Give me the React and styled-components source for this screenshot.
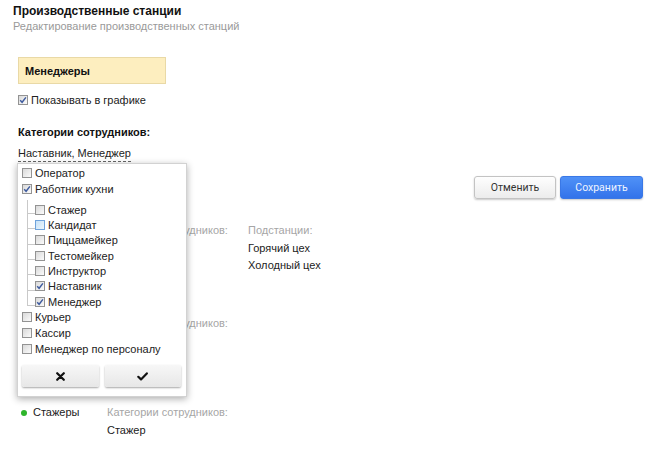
import React from "react";
import styled, { createGlobalStyle } from "styled-components";

const Global = createGlobalStyle`
  html, body { margin: 0; padding: 0; background: #fff; }
  body {
    font-family: "Liberation Sans", Arial, sans-serif;
    font-size: 11px;
    color: #222;
  }
`;

const Page = styled.div`
  padding: 0 7px 0 13px;
`;

const Title = styled.div`
  margin-top: 3px;
  font-size: 12px;
  font-weight: bold;
  line-height: 16px;
  color: #111;
`;

const Subtitle = styled.div`
  font-size: 11px;
  line-height: 15px;
  color: #9a9a9a;
`;

const Form = styled.div`
  padding-left: 5px;
`;

const NameBox = styled.div`
  box-sizing: border-box;
  margin-top: 23px;
  width: 148px;
  height: 27px;
  display: flex;
  align-items: center;
  padding-left: 6px;
  background: #fdeebf;
  border: 1px solid #e9d9a6;
  font-weight: bold;
  color: #111;
`;

const CheckRow = styled.label`
  margin-top: 8px;
  display: flex;
  align-items: center;
  gap: 3px;
  line-height: 16px;
  height: 16px;
`;

const SectionLabel = styled.div`
  margin-top: 16px;
  font-size: 11px;
  font-weight: bold;
  line-height: 16px;
  color: #111;
`;

const SelectWrap = styled.div`
  position: relative;
  margin-top: 6px;
  height: 16px;
`;

const SelectValue = styled.span`
  display: inline-block;
  line-height: 15px;
  border-bottom: 1px dashed #666;
  color: #222;
`;

const Popup = styled.div`
  position: absolute;
  left: -1px;
  top: calc(100% + 1px);
  width: 170px;
  box-sizing: border-box;
  padding: 1px 5px 9px 4px;
  background: #fff;
  border: 1px solid #d2d2d2;
  box-shadow: 0 2px 7px rgba(0, 0, 0, 0.32);
  z-index: 10;
  font-size: 11px;
`;

const Item = styled.div`
  display: flex;
  align-items: center;
  gap: 3px;
  height: ${(p) => (p.$child ? "15.33px" : "16px")};
  position: relative;
  color: #222;
  white-space: nowrap;

  ${(p) =>
    p.$child &&
    `
    &::before {
      content: "";
      position: absolute;
      left: -8px;
      top: 11px;
      width: 8px;
      height: 1px;
      background: #c9c9c9;
    }
  `}
`;

const Children = styled.div`
  position: relative;
  margin-left: 13px;
  margin-top: 5px;

  &::before {
    content: "";
    position: absolute;
    left: -8px;
    top: -2px;
    bottom: 4px;
    width: 1px;
    background: #c9c9c9;
  }
`;

const Box = styled.span`
  box-sizing: border-box;
  flex: none;
  width: 10px;
  height: 10px;
  display: inline-flex;
  align-items: center;
  justify-content: center;
  border: 1px solid ${(p) => (p.$hover ? "#6fa3dc" : "#939393")};
  background: ${(p) =>
    p.$hover
      ? "linear-gradient(135deg, #c7e2f8, #eaf5fd)"
      : "linear-gradient(135deg, #d9d9d9, #fbfbfb)"};
`;

const PopupActions = styled.div`
  display: flex;
  gap: 6px;
  margin-top: 8px;
`;

const PopupButton = styled.button`
  flex: 1;
  height: 22px;
  display: flex;
  align-items: center;
  justify-content: center;
  border: none;
  border-radius: 2px;
  background: linear-gradient(#f7f7f7, #e7e7e7);
  box-shadow: 0 1px 2px rgba(0, 0, 0, 0.35);
  padding: 0;
  cursor: pointer;
`;

const Actions = styled.div`
  display: flex;
  justify-content: flex-end;
  gap: 4px;
  margin-top: 14px;
`;

const Button = styled.button`
  box-sizing: border-box;
  height: 23px;
  width: ${(p) => (p.$primary ? "83px" : "82px")};
  border-radius: 3px;
  font-family: Roboto, "Liberation Sans", Arial, sans-serif;
  font-size: 10.5px;
  padding: 0;
  cursor: pointer;
  color: ${(p) => (p.$primary ? "#eef4ff" : "#333")};
  border: 1px solid ${(p) => (p.$primary ? "#3a78e6" : "#c3c3c3")};
  background: ${(p) =>
    p.$primary
      ? "linear-gradient(#4f91f7, #3373ea)"
      : "linear-gradient(#fefefe, #ececec)"};
  box-shadow: 0 1px 2px rgba(0, 0, 0, 0.22);
`;

const List = styled.div`
  margin-top: 23px;
`;

const Row = styled.div`
  display: grid;
  grid-template-columns: 89px 141px 1fr;
  height: ${(p) => p.$h || "auto"};
  line-height: 17.5px;
`;

const NameCell = styled.div`
  display: flex;
  align-items: center;
  gap: 6px;
  padding-left: 3px;
  height: 17.5px;
  color: #222;
`;

const Dot = styled.span`
  width: 6px;
  height: 6px;
  border-radius: 50%;
  background: #2eb52b;
  flex: none;
`;

const Col = styled.div`
  display: flex;
  flex-direction: column;
`;

const ColLabel = styled.div`
  color: #a6a6a6;
`;

const ColValue = styled.div`
  color: #222;
`;

const Tick = () => (
  <svg width="8" height="8" viewBox="0 0 8 8">
    <path d="M1.2 4.2 L3.1 6.3 L6.9 1.4" fill="none" stroke="#3d5a9e" strokeWidth="1.4" />
  </svg>
);

const Check = ({ checked, hover }) => (
  <Box $hover={hover}>{checked && <Tick />}</Box>
);

const CrossIcon = () => (
  <svg width="9" height="9" viewBox="0 0 9 9">
    <path d="M1.2 1.2 L7.8 7.8 M7.8 1.2 L1.2 7.8" stroke="#111" strokeWidth="2.2" strokeLinecap="round" />
  </svg>
);

const CheckIcon = () => (
  <svg width="11" height="9" viewBox="0 0 11 9">
    <path d="M1.3 4.8 L4 7.4 L9.8 1.4" fill="none" stroke="#111" strokeWidth="2.2" strokeLinecap="round" strokeLinejoin="round" />
  </svg>
);

const kitchen = [
  { t: "Стажер" },
  { t: "Кандидат", hover: true },
  { t: "Пиццамейкер" },
  { t: "Тестомейкер" },
  { t: "Инструктор" },
  { t: "Наставник", c: true },
  { t: "Менеджер", c: true },
];

export default function App() {
  return (
    <>
      <Global />
      <Page>
        <Title>Производственные станции</Title>
        <Subtitle>Редактирование производственных станций</Subtitle>
        <Form>
          <NameBox>Менеджеры</NameBox>
          <CheckRow>
            <Check checked />
            Показывать в графике
          </CheckRow>
          <SectionLabel>Категории сотрудников:</SectionLabel>
          <SelectWrap>
            <SelectValue>Наставник, Менеджер</SelectValue>
            <Popup>
              <Item>
                <Check />
                Оператор
              </Item>
              <Item>
                <Check checked />
                Работник кухни
              </Item>
              <Children>
                {kitchen.map((k) => (
                  <Item $child key={k.t}>
                    <Check checked={k.c} hover={k.hover} />
                    {k.t}
                  </Item>
                ))}
              </Children>
              <Item>
                <Check />
                Курьер
              </Item>
              <Item>
                <Check />
                Кассир
              </Item>
              <Item>
                <Check />
                Менеджер по персоналу
              </Item>
              <PopupActions>
                <PopupButton aria-label="Отмена">
                  <CrossIcon />
                </PopupButton>
                <PopupButton aria-label="Готово">
                  <CheckIcon />
                </PopupButton>
              </PopupActions>
            </Popup>
          </SelectWrap>
        </Form>
        <Actions>
          <Button>Отменить</Button>
          <Button $primary>Сохранить</Button>
        </Actions>
        <Form>
          <List>
            <Row $h="93px">
              <NameCell />
              <Col>
                <ColLabel>Категории сотрудников:</ColLabel>
              </Col>
              <Col>
                <ColLabel>Подстанции:</ColLabel>
                <ColValue>Горячий цех</ColValue>
                <ColValue>Холодный цех</ColValue>
              </Col>
            </Row>
            <Row $h="89px">
              <NameCell />
              <Col>
                <ColLabel>Категории сотрудников:</ColLabel>
              </Col>
              <Col />
            </Row>
            <Row>
              <NameCell>
                <Dot />
                Стажеры
              </NameCell>
              <Col>
                <ColLabel>Категории сотрудников:</ColLabel>
                <ColValue>Стажер</ColValue>
              </Col>
              <Col />
            </Row>
          </List>
        </Form>
      </Page>
    </>
  );
}
